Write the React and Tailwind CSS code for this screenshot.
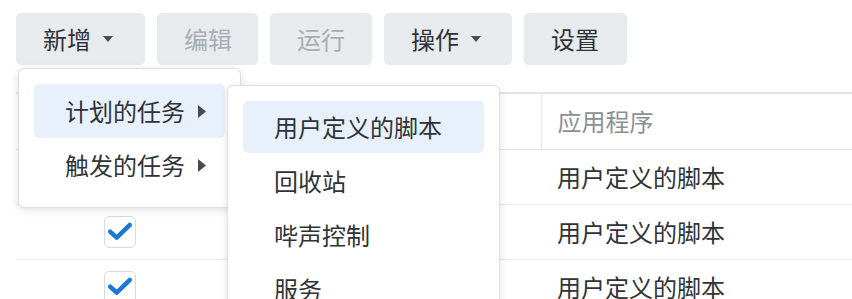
import React from "react";

const font = { fontFamily: '"Noto Sans CJK SC", "Noto Sans", sans-serif' };

const Caret = () => (
  <svg width="10" height="6" viewBox="0 0 10 6" className="ml-[12px]">
    <path d="M0 0 L10 0 L5 6 Z" fill="#474b51" />
  </svg>
);

const RightCaret = () => (
  <svg width="8" height="13" viewBox="0 0 8 13" className="ml-[13px]">
    <path d="M0 0 L8 6.5 L0 13 Z" fill="#474b51" />
  </svg>
);

const Check = () => (
  <div className="w-[32px] h-[32px] rounded-[5px] border border-[#d6dade] bg-white flex items-center justify-center">
    <svg width="32" height="32" viewBox="0 0 32 32">
      <path
        d="M5.5 15.5 L12.5 22 L26.5 8.5"
        fill="none"
        stroke="#1b78d6"
        strokeWidth="4.8"
        strokeLinecap="round"
        strokeLinejoin="round"
      />
    </svg>
  </div>
);

const ToolButton = ({ label, width, disabled, caret }) => (
  <button
    className={
      "h-[52px] rounded-[5px] bg-[#e7ebee] flex items-center pl-[27px] text-[24px] " +
      (disabled ? "text-[#a9adb3]" : "text-[#2f3338]")
    }
    style={{ width }}
  >
    <span className="leading-none">{label}</span>
    {caret && <Caret />}
  </button>
);

const rows = ["用户定义的脚本", "用户定义的脚本", "用户定义的脚本"];

export default function App() {
  return (
    <div
      className="relative w-[852px] h-[299px] overflow-hidden bg-white text-[#2f3338]"
      style={font}
    >
      <div className="flex gap-[12px] pt-[13px] pl-[16px]">
        <ToolButton label="新增" width={129} caret />
        <ToolButton label="编辑" width={101} disabled />
        <ToolButton label="运行" width={102} disabled />
        <ToolButton label="操作" width={128} caret />
        <ToolButton label="设置" width={103} />
      </div>

      <div className="mt-[27px] pl-[16px]">
        <table className="w-full border-collapse text-[24px]">
          <thead>
            <tr className="border-t-2 border-b border-[#e1e5e9] h-[56px]">
              <th className="w-[210px]"></th>
              <th className="w-[315px]"></th>
              <th className="text-left font-normal pl-[16px] text-[#8b9096] border-l border-[#e4e7eb]">
                应用程序
              </th>
            </tr>
          </thead>
          <tbody>
            {rows.map((r, i) => (
              <tr key={i} className="border-b border-[#e6e9ec] h-[55px]">
                <td>
                  <div className="flex justify-center pr-[2px]">
                    <Check />
                  </div>
                </td>
                <td></td>
                <td className="pl-[16px]">{r}</td>
              </tr>
            ))}
          </tbody>
        </table>
      </div>

      {/* first dropdown */}
      <div className="absolute left-[18px] top-[68px] w-[223px] rounded-[6px] border border-[#dde0e4] bg-white p-[15px] shadow-[0_2px_8px_rgba(0,0,0,0.12)] text-[24px]">
        <div className="h-[54px] rounded-[5px] bg-[#e8f1fb] flex items-center pl-[31px]">
          <span className="leading-none">计划的任务</span>
          <RightCaret />
        </div>
        <div className="h-[54px] flex items-center pl-[31px]">
          <span className="leading-none">触发的任务</span>
          <RightCaret />
        </div>
      </div>

      {/* submenu */}
      <div className="absolute left-[227px] top-[85px] w-[273px] h-[260px] rounded-[6px] border border-[#dde0e4] bg-white p-[15px] shadow-[0_2px_8px_rgba(0,0,0,0.12)] text-[24px]">
        <div className="h-[52px] rounded-[5px] bg-[#e8f1fb] flex items-center pl-[31px] mb-[1px]">
          <span className="leading-none">用户定义的脚本</span>
        </div>
        <div className="h-[54px] flex items-center pl-[31px]">
          <span className="leading-none">回收站</span>
        </div>
        <div className="h-[54px] flex items-center pl-[31px]">
          <span className="leading-none">哔声控制</span>
        </div>
        <div className="h-[54px] flex items-center pl-[31px]">
          <span className="leading-none">服务</span>
        </div>
      </div>
    </div>
  );
}
